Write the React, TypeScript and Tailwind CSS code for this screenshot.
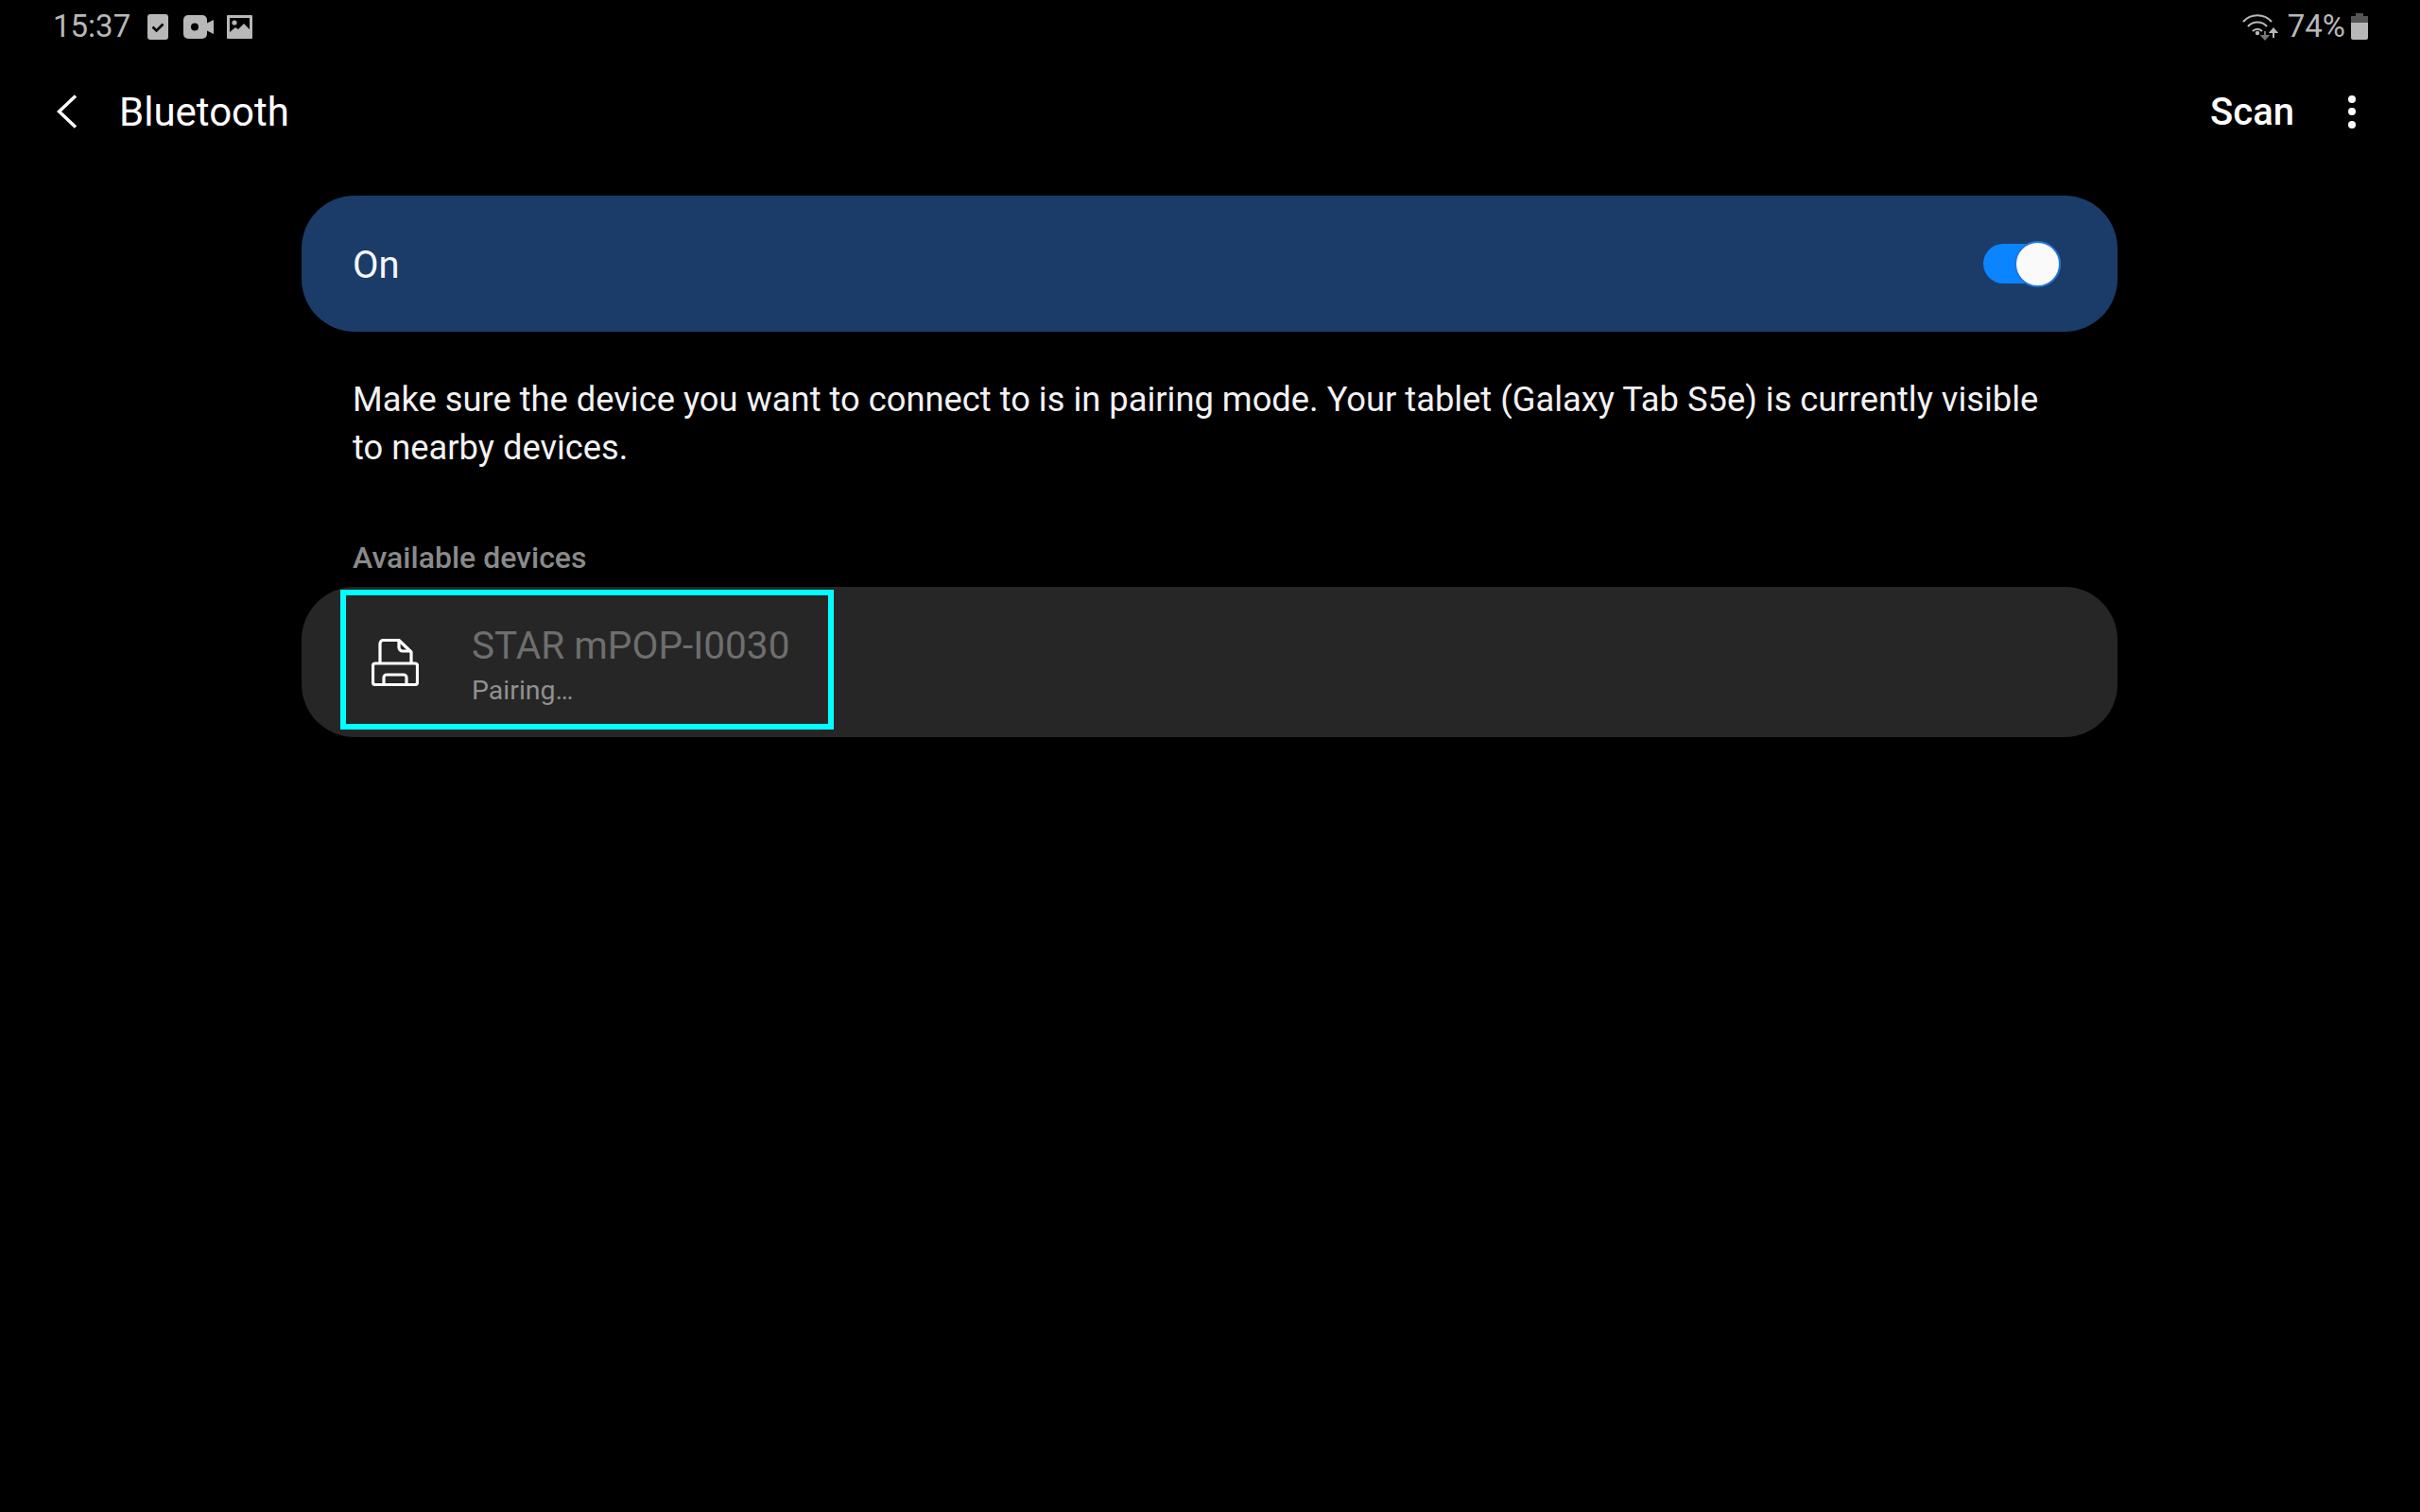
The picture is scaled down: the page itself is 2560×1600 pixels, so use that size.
export default function App() {
  return (
    <div className="relative w-[2560px] h-[1600px] bg-black text-white overflow-hidden font-['Roboto',sans-serif]">
      {/* status bar */}
      <div className="h-[56px] flex items-center justify-between pl-[56px] pr-[55px] text-[#b8b8b8]">
        <div className="flex items-center">
          <span className="text-[33px] leading-[56px] -mt-[1px]">15:37</span>
          <svg className="ml-[18px]" width="22" height="27" viewBox="0 0 22 27">
            <rect x="0" y="0" width="22" height="27" rx="3" fill="#b8b8b8" />
            <path d="M5.5 13.5l4 4 7-7" fill="none" stroke="#000" strokeWidth="2.6" />
          </svg>
          <svg className="ml-[16px]" width="32" height="25" viewBox="0 0 32 25">
            <rect x="0" y="0" width="25" height="25" rx="5" fill="#b8b8b8" />
            <path d="M24 9l8-4v15l-8-4z" fill="#b8b8b8" />
            <circle cx="12" cy="12.5" r="4" fill="#000" />
          </svg>
          <svg className="ml-[14px]" width="27" height="25" viewBox="0 0 27 25">
            <rect width="27" height="25" rx="1" fill="#b8b8b8" />
            <path d="M3 3h21v12l-6-6-6 6-3-2-6 5z" fill="#000" />
            <circle cx="8" cy="8" r="2.6" fill="#b8b8b8" />
          </svg>
        </div>
        <div className="flex items-center">
          <svg width="38" height="30" viewBox="0 0 38 30" className="mt-[2px]">
            <g fill="none" stroke="#b8b8b8" strokeWidth="2.2">
              <path d="M1 9c8-9 22-9 30 0" />
              <path d="M6 14c5-6 15-6 20 0" />
              <path d="M11 19c3-3 7-3 10 0" />
            </g>
            <circle cx="16" cy="21" r="2.2" fill="#b8b8b8" />
            <path d="M24 19v7M21 24l3 3.5 3-3.5z" stroke="#777" fill="#777" strokeWidth="2" />
            <path d="M33 26v-8M30 20l3-3.5 3 3.5z" stroke="#b8b8b8" fill="#b8b8b8" strokeWidth="2" />
          </svg>
          <span className="ml-[10px] text-[33px] leading-[56px] -mt-[1px]">74%</span>
          <svg className="ml-[6px]" width="18" height="28" viewBox="0 0 18 28">
            <rect x="5" y="0" width="8" height="4" fill="#555" />
            <rect x="0" y="3" width="18" height="25" rx="2" fill="#b8b8b8" />
            <path d="M0 5a2 2 0 0 1 2-2h14a2 2 0 0 1 2 2v5H0z" fill="#555" />
          </svg>
        </div>
      </div>

      {/* app bar */}
      <div className="h-[124px] flex items-center justify-between pl-[60px] pr-[68px]">
        <div className="flex items-center">
          <svg width="22" height="36" viewBox="0 0 22 36" fill="none">
            <path d="M20 1.500L2.500 18 20 34.500" stroke="#fff" strokeWidth="3.500" />
          </svg>
          <span className="ml-[44px] mt-[2px] text-[42px] leading-[56px]">Bluetooth</span>
        </div>
        <div className="flex items-center">
          <span className="mt-[2px] text-[40px] leading-[56px] font-medium">Scan</span>
          <div className="ml-[57px] flex flex-col gap-[5.500px]">
            <span className="w-[8px] h-[8px] rounded-full bg-white" />
            <span className="w-[8px] h-[8px] rounded-full bg-white" />
            <span className="w-[8px] h-[8px] rounded-full bg-white" />
          </div>
        </div>
      </div>

      <div className="ml-[319px] w-[1921px] pt-[27px]">
        <div className="h-[144px] rounded-[56px] bg-[#1b3c69] flex items-center justify-between pl-[54px] pr-[60px]">
          <span className="text-[40px] leading-[50px] pt-[4px] text-[#f4f8fc]">On</span>
          <div className="relative w-[82px] h-[42px] rounded-full bg-[#0a84ff]">
            <div className="absolute right-0 top-[-3px] w-[49px] h-[49px] rounded-full bg-[#fafafa] border-2 border-[#1f78d8]" />
          </div>
        </div>
        <p className="mt-[46px] px-[54px] text-[36.3px] leading-[51px] text-[#f2f2f2]">
          Make sure the device you want to connect to is in pairing mode. Your tablet (Galaxy Tab S5e) is currently visible to nearby devices.
        </p>
        <div className="mt-[71px] pl-[54px] text-[32px] leading-[40px] font-medium text-[#8a8a8a]">Available devices</div>
        <div className="mt-[11px] h-[159px] rounded-[56px] bg-[#262626] flex items-center pl-[74px]">
          <svg width="50" height="50" viewBox="0 0 50 50" fill="none" stroke="#fff" strokeWidth="3.200" strokeLinejoin="round">
            <path d="M9 26V5a3.500 3.500 0 0 1 3.500-3.500H29L42 14v12" />
            <path d="M29 1.500V9a4 4 0 0 0 4 4h9" />
            <path d="M4 26h42a2.500 2.500 0 0 1 2.500 2.500v17.500a2.500 2.500 0 0 1-2.500 2.500H4a2.500 2.500 0 0 1-2.500-2.500V28.500A2.500 2.500 0 0 1 4 26z" />
            <path d="M13 48.500V41a3 3 0 0 1 3-3h18a3 3 0 0 1 3 3v7.500" />
          </svg>
          <div className="ml-[56px] pt-[6px] flex flex-col">
            <span className="text-[40.6px] leading-[48px] text-[#6e6e6e]">STAR mPOP-I0030</span>
            <span className="mt-[6px] text-[28.5px] leading-[36px] text-[#909090]">Pairing…</span>
          </div>
        </div>
      </div>

      {/* annotation overlay */}
      <div className="absolute left-[360px] top-[624px] w-[522px] h-[148px] border-[6px] border-[#00ffff]" />
    </div>
  );
}
